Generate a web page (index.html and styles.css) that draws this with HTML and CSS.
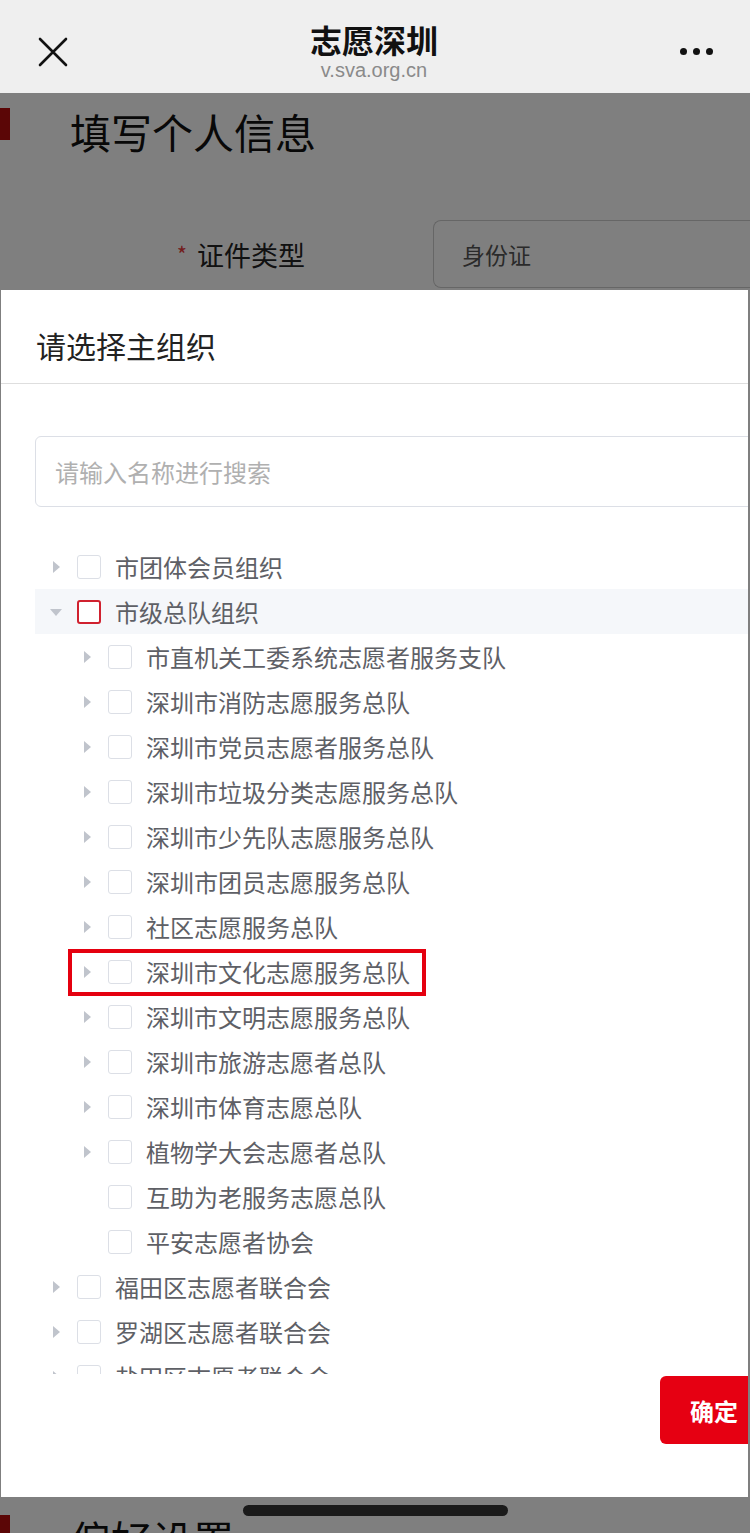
FILE: index.html
```html
<!DOCTYPE html>
<html lang="zh-CN">
<head>
    <meta charset="UTF-8">
    <meta name="viewport" content="width=device-width, initial-scale=1.0">
    <title>志愿深圳</title>
    <link rel="stylesheet" href="styles.css">
</head>
<body>
    <header class="navbar">
        <div class="nav-close">
            <svg width="30" height="30" viewBox="0 0 30 30"><path d="M2 2 L28 28 M28 2 L2 28" stroke="#111" stroke-width="2.6" stroke-linecap="round" fill="none"/></svg>
        </div>
        <div class="nav-title">
            <div class="nav-name">志愿深圳</div>
            <div class="nav-url">v.sva.org.cn</div>
        </div>
        <div class="nav-more"><span></span><span></span><span></span></div>
    </header>

    <main class="page">
        <h2 class="section-title">填写个人信息</h2>
        <div class="form-row">
            <label class="form-label"><span class="required">*</span>证件类型</label>
            <div class="form-input">身份证</div>
        </div>
        <h2 class="section-title second">偏好设置</h2>

        <div class="mask"></div>

        <div class="dialog">
            <div class="dialog-header">请选择主组织</div>
            <div class="dialog-body">
                <div class="search-box">请输入名称进行搜索</div>
                <div class="tree">
                    <div class="tree-node"><i class="arrow"></i><i class="check"></i><span>市团体会员组织</span></div>
                    <div class="tree-node current"><i class="arrow open"></i><i class="check active"></i><span>市级总队组织</span></div>
                    <div class="tree-node child"><i class="arrow"></i><i class="check"></i><span>市直机关工委系统志愿者服务支队</span></div>
                    <div class="tree-node child"><i class="arrow"></i><i class="check"></i><span>深圳市消防志愿服务总队</span></div>
                    <div class="tree-node child"><i class="arrow"></i><i class="check"></i><span>深圳市党员志愿者服务总队</span></div>
                    <div class="tree-node child"><i class="arrow"></i><i class="check"></i><span>深圳市垃圾分类志愿服务总队</span></div>
                    <div class="tree-node child"><i class="arrow"></i><i class="check"></i><span>深圳市少先队志愿服务总队</span></div>
                    <div class="tree-node child"><i class="arrow"></i><i class="check"></i><span>深圳市团员志愿服务总队</span></div>
                    <div class="tree-node child"><i class="arrow"></i><i class="check"></i><span>社区志愿服务总队</span></div>
                    <div class="tree-node child marked"><i class="arrow"></i><i class="check"></i><span>深圳市文化志愿服务总队</span></div>
                    <div class="tree-node child"><i class="arrow"></i><i class="check"></i><span>深圳市文明志愿服务总队</span></div>
                    <div class="tree-node child"><i class="arrow"></i><i class="check"></i><span>深圳市旅游志愿者总队</span></div>
                    <div class="tree-node child"><i class="arrow"></i><i class="check"></i><span>深圳市体育志愿总队</span></div>
                    <div class="tree-node child"><i class="arrow"></i><i class="check"></i><span>植物学大会志愿者总队</span></div>
                    <div class="tree-node child"><i class="arrow leaf"></i><i class="check"></i><span>互助为老服务志愿总队</span></div>
                    <div class="tree-node child"><i class="arrow leaf"></i><i class="check"></i><span>平安志愿者协会</span></div>
                    <div class="tree-node"><i class="arrow"></i><i class="check"></i><span>福田区志愿者联合会</span></div>
                    <div class="tree-node"><i class="arrow"></i><i class="check"></i><span>罗湖区志愿者联合会</span></div>
                    <div class="tree-node"><i class="arrow"></i><i class="check"></i><span>盐田区志愿者联合会</span></div>
                </div>
            </div>
            <div class="dialog-footer">
                <button class="btn-confirm">确定</button>
            </div>
        </div>

        <div class="home-bar"></div>
    </main>
</body>
</html>
```

FILE: styles.css
```css
/* 志愿深圳 - 选择主组织弹窗 */
body {
    margin: 0;
    padding: 0;
    width: 750px;
    height: 1533px;
    overflow: hidden;
    background-color: #fff;
    font-family: 'Noto Sans CJK SC', 'Noto Sans', sans-serif;
    color: #222;
}

.navbar {
    height: 93px;
    background-color: #efefef;
    display: flex;
    align-items: center;
    justify-content: space-between;
    position: relative;
    z-index: 3;
}

.nav-close {
    width: 30px;
    height: 30px;
    margin-left: 38px;
    margin-top: 10px;
}

.nav-close svg {
    display: block;
}

.nav-title {
    text-align: center;
    padding-top: 8px;
}

.nav-name {
    font-size: 32px;
    font-weight: bold;
    line-height: 38px;
    color: #111;
}

.nav-url {
    font-family: 'Liberation Sans', Arial, sans-serif;
    font-size: 20px;
    line-height: 24px;
    color: #8a8a8a;
}

.nav-more {
    display: flex;
    gap: 6px;
    margin-right: 37px;
    margin-top: 10px;
}

.nav-more span {
    width: 7px;
    height: 7px;
    border-radius: 50%;
    background-color: #111;
}

/* 背景页面 */
.page {
    position: relative;
    height: 1440px;
}

.section-title {
    margin: 0;
    padding: 13px 0 0 70px;
    font-size: 41px;
    font-weight: normal;
    line-height: 50px;
    color: #111;
    position: relative;
}

.section-title::before {
    content: '';
    position: absolute;
    left: 0;
    top: 15px;
    width: 10px;
    height: 32px;
    background-color: #b60d0d;
}

.section-title.second {
    margin-top: 1212px;
}

.form-row {
    display: flex;
    align-items: center;
    margin-top: 64px;
}

.form-label {
    width: 305px;
    text-align: right;
    font-size: 27px;
    color: #222;
}

.required {
    color: #e63b3b;
    font-size: 22px;
    margin-right: 10px;
    vertical-align: 3px;
}

.form-input {
    margin-left: 128px;
    flex: 1;
    height: 66px;
    border: 1px solid #ccc;
    border-right: none;
    border-radius: 8px 0 0 8px;
    padding-left: 28px;
    font-size: 23px;
    line-height: 66px;
    color: #555;
}

.mask {
    position: absolute;
    inset: 0;
    background-color: rgba(0, 0, 0, 0.5);
}

/* 弹窗 */
.dialog {
    position: absolute;
    top: 197px;
    left: 1px;
    right: 2px;
    height: 1207px;
    background-color: #fff;
    overflow: hidden;
    display: flex;
    flex-direction: column;
}

.dialog-header {
    height: 77px;
    padding: 16px 35px 0;
    display: flex;
    align-items: center;
    border-bottom: 1px solid #dedede;
    font-size: 30px;
    color: #222;
}

.dialog-body {
    padding: 52px 0 0 34px;
}

.search-box {
    height: 69px;
    margin-right: -20px;
    border: 1px solid #dcdfe6;
    border-radius: 6px;
    padding-left: 19px;
    font-size: 24px;
    line-height: 69px;
    color: #b0b0b0;
}

.tree {
    position: relative;
    margin-top: 37px;
    height: 830px;
    overflow: hidden;
}

.tree-node {
    height: 45px;
    display: flex;
    align-items: center;
    padding-left: 9px;
    font-size: 24px;
    color: #5e6066;
    position: relative;
}

.tree-node.child {
    padding-left: 40px;
}

.tree-node.current {
    background-color: #f5f7fa;
}

.arrow {
    width: 24px;
    height: 24px;
    position: relative;
}

.arrow::after {
    content: '';
    position: absolute;
    left: 9px;
    top: 6px;
    border-left: 7px solid #c0c4cc;
    border-top: 6px solid transparent;
    border-bottom: 6px solid transparent;
}

.arrow.open::after {
    left: 6px;
    top: 9px;
    border-top: 7px solid #c0c4cc;
    border-left: 6px solid transparent;
    border-right: 6px solid transparent;
    border-bottom: none;
}

.arrow.leaf::after {
    display: none;
}

.check {
    width: 22px;
    height: 22px;
    margin-left: 9px;
    margin-right: 14px;
    border: 1px solid #dcdfe6;
    border-radius: 3px;
    background-color: #fff;
}

.check.active {
    border: 2px solid #d0212f;
    width: 20px;
    height: 20px;
}

.tree-node.marked::after {
    content: '';
    position: absolute;
    left: 33px;
    top: 0;
    width: 350px;
    height: 39px;
    border: 4px solid #e5000f;
}

.dialog-footer {
    display: flex;
    justify-content: flex-end;
    padding-top: 2px;
}

.btn-confirm {
    width: 100px;
    height: 68px;
    margin-right: -12px;
    border: none;
    border-radius: 6px;
    background-color: #e60012;
    color: #fff;
    font-family: 'Noto Sans CJK SC', sans-serif;
    font-size: 24px;
    font-weight: bold;
    text-align: left;
    padding-left: 30px;
}

.home-bar {
    position: absolute;
    left: 243px;
    top: 1412px;
    width: 265px;
    height: 11px;
    border-radius: 6px;
    background-color: #1a1a1a;
}
```
